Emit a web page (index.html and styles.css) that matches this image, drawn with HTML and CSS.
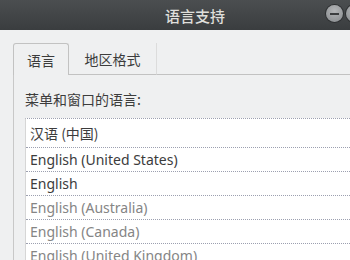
FILE: index.html
```html
<!DOCTYPE html>
<html lang="zh">
<head>
<meta charset="utf-8">
<link rel="stylesheet" href="styles.css">
</head>
<body>
<div class="window">
  <div class="titlebar">
    <span class="title">语言支持</span>
    <div class="controls">
      <span class="btn"><span class="dash"></span></span>
      <span class="btn"></span>
    </div>
  </div>
  <div class="content">
    <div class="tabs">
      <div class="tab active">语言</div>
      <div class="tab">地区格式</div>
      <div class="tab-rest"></div>
    </div>
    <div class="pane">
      <div class="label">菜单和窗口的语言:</div>
      <ul class="list">
        <li class="row first">汉语 (中国)</li>
        <li class="row">English (United States)</li>
        <li class="row">English</li>
        <li class="row dim">English (Australia)</li>
        <li class="row dim">English (Canada)</li>
        <li class="row dim">English (United Kingdom)</li>
      </ul>
    </div>
  </div>
</div>
</body>
</html>
```
FILE: styles.css
```css
html, body {
  margin: 0;
  padding: 0;
  width: 350px;
  height: 260px;
  overflow: hidden;
  background: #eff0f1;
}
.window {
  width: 390px;
  font-family: "Noto Sans", "Noto Sans CJK SC", sans-serif;
  color: #3c3c3c;
}
.titlebar {
  position: relative;
  height: 30px;
  background: linear-gradient(#4b4e50, #3a3d3f);
  display: flex;
  align-items: center;
  justify-content: center;
}
.title {
  color: #dfdfdb;
  font-family: "Noto Sans CJK SC", sans-serif;
  font-size: 15px;
  font-weight: 500;
}
.controls {
  position: absolute;
  left: 326px;
  top: 5px;
  display: flex;
  gap: 3px;
}
.btn {
  width: 17px;
  height: 17px;
  border-radius: 50%;
  background: radial-gradient(circle at 50% 35%, #b4b6b8, #86898c);
  box-shadow: 0 0 0 1px #2e3032;
  display: flex;
  align-items: center;
  justify-content: center;
}
.dash {
  width: 9px;
  height: 2px;
  background: #3b3d3f;
}
.content {
  padding: 13px 0 0 13px;
}
.tabs {
  display: flex;
  height: 32px;
}
.tab {
  font-family: "Noto Sans CJK SC", sans-serif;
  font-size: 14px;
  color: #3c3c3c;
  display: flex;
  align-items: center;
  justify-content: center;
  box-sizing: border-box;
  border-bottom: 1px solid #c2c2c2;
}
.tab:nth-child(2) {
  width: 88px;
  border-right: 1px solid #dcdcdc;
}
.tab.active {
  width: 56px;
  border: 1px solid #c2c2c2;
  border-bottom: none;
  border-radius: 3px 3px 0 0;
  padding-top: 1px;
}
.tab-rest {
  flex: 1;
  border-bottom: 1px solid #c2c2c2;
}
.pane {
  border-left: 1px solid #c8c8c8;
  padding: 14px 0 0 11px;
  height: 200px;
}
.label {
  font-family: "Noto Sans CJK SC", sans-serif;
  font-size: 14px;
  line-height: 20px;
  color: #3c3c3c;
}
.list {
  list-style: none;
  margin: 9px 0 0 0;
  padding: 0;
  background: #fff;
  border-left: 1px solid #d6d6d6;
  border-top: 1px dotted #9ca0b0;
}
.row {
  height: 24px;
  box-sizing: border-box;
  border-bottom: 1px dotted #9ca0b0;
  padding-left: 4px;
  font-size: 14px;
  line-height: 24px;
  white-space: nowrap;
}
.row.first {
  height: 29px;
  line-height: 28px;
  font-family: "Noto Sans CJK SC", sans-serif;
}
.row.dim {
  color: #858585;
}
```
